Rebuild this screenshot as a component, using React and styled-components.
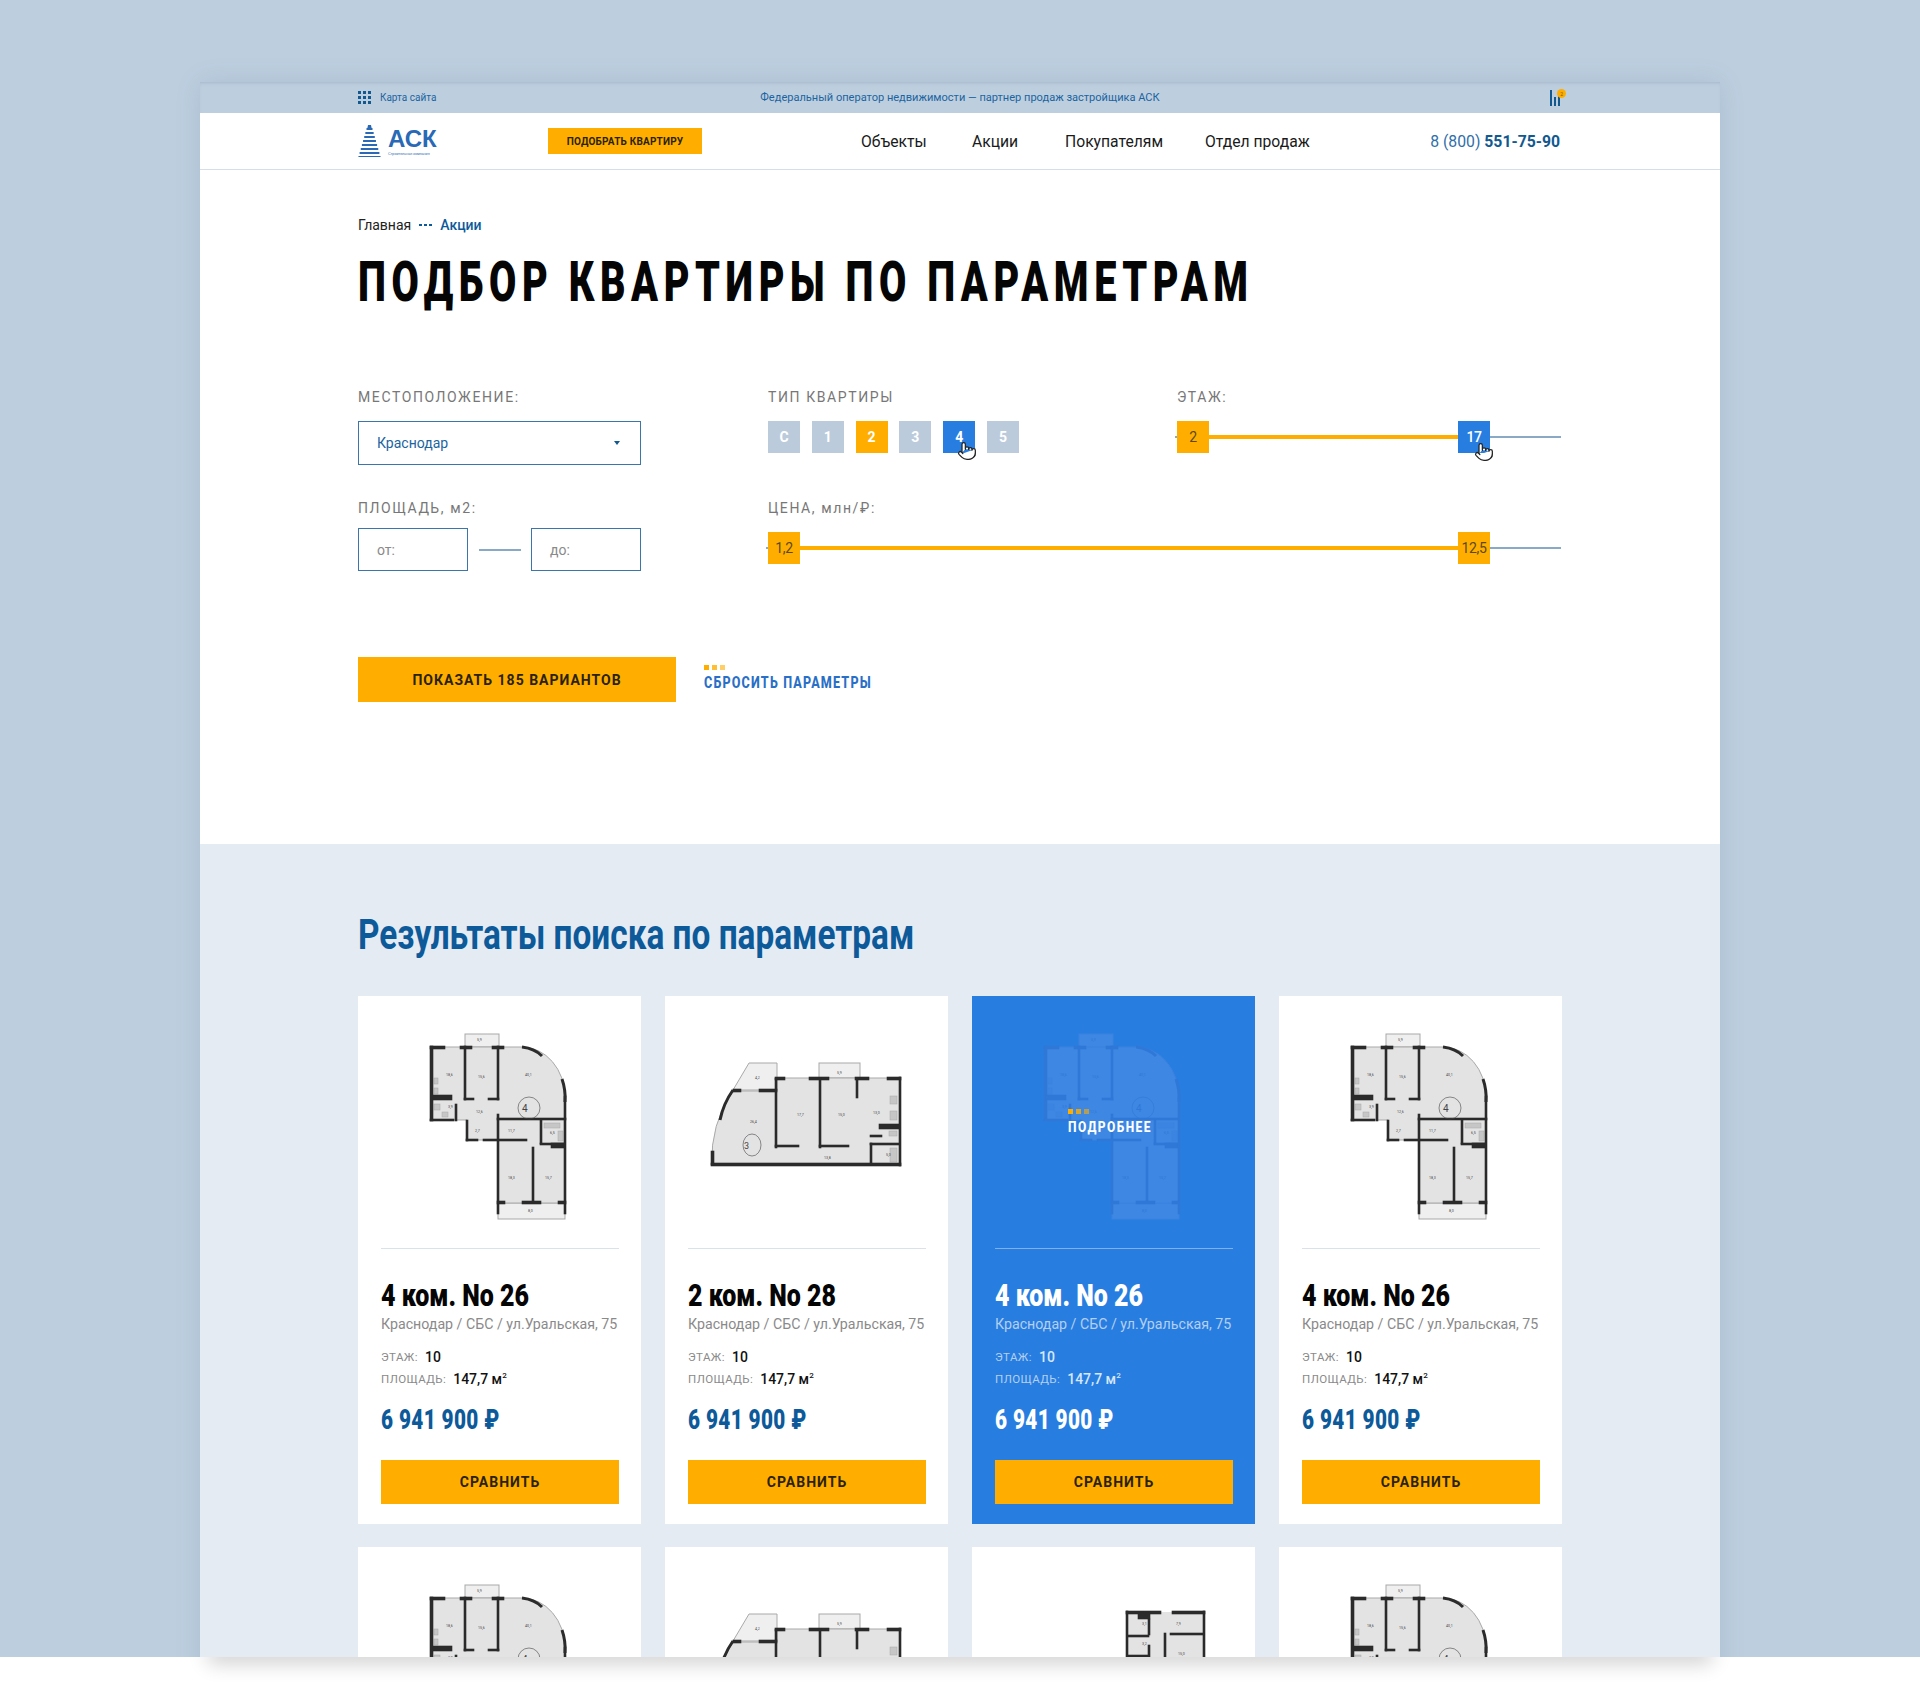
import styled, { createGlobalStyle, css } from "styled-components";
import { Pointer } from "lucide-react";

// no condensed face is installed, so the headline font is Roboto pressed sideways
const squeeze = (k) => css`
  font-family: Roboto, sans-serif;
  display: block;
  width: max-content;
  white-space: nowrap;
  transform: scaleX(${k});
  transform-origin: 0 50%;
`;

const Global = createGlobalStyle`
  * { box-sizing: border-box; }
  body { margin: 0; background: #fff; font-family: Roboto, "Liberation Sans", sans-serif; }
`;

const Stage = styled.div`
  height: 1657px;
  overflow: hidden;
  background: #bdcfdf;
  padding-top: 82px;
`;

const Window = styled.div`
  width: 1520px;
  margin: 0 auto;
  background: #fff;
  box-shadow: 0 0 24px rgba(60, 80, 110, 0.14);
`;

const ShadowStrip = styled.div`
  position: relative;
  height: 26px;
  overflow: hidden;
  background: #fff;
  &::before {
    content: "";
    position: absolute;
    left: 208px;
    right: 208px;
    top: -20px;
    height: 20px;
    box-shadow: 0 6px 20px rgba(0, 0, 0, 0.2);
  }
`;

const TopBar = styled.div`
  height: 31px;
  background: #bdcfdf;
  padding: 0 153px;
  display: grid;
  grid-template-columns: 1fr auto 1fr;
  align-items: center;
  color: #1c649f;
  box-shadow: inset 0 3px 4px -3px rgba(70, 90, 120, 0.3);
`;

const SiteMap = styled.div`
  margin-left: 5px;
  display: flex;
  align-items: center;
  gap: 9px;
  font-size: 10px;
`;

const Slogan = styled.div`
  font-size: 11.05px;
`;

const Stats = styled.div`
  justify-self: end;
  display: flex;
`;

const Header = styled.header`
  height: 57px;
  border-bottom: 1px solid #d6dfe9;
  padding: 0 160px 0 158px;
  display: flex;
  align-items: center;
`;

const Logo = styled.div`
  width: 190px;
  display: flex;
  align-items: center;
  gap: 7px;
`;

const LogoWords = styled.div`
  color: #2a69b5;
  font-family: "Liberation Sans", sans-serif;
  font-weight: 700;
  font-size: 24px;
  line-height: 20px;
  padding-top: 4px;
  small {
    display: block;
    font-size: 3.7px;
    font-weight: 400;
    line-height: 5px;
    margin-top: 3px;
    white-space: nowrap;
  }
`;

const PickButton = styled.div`
  width: 154px;
  height: 26px;
  background: #ffae00;
  color: #2a2208;
  font-size: 10px;
  font-weight: 700;
  letter-spacing: 0.2px;
  display: flex;
  align-items: center;
  justify-content: center;
  white-space: nowrap;
`;

const Nav = styled.nav`
  margin-left: 159px;
  display: flex;
  font-size: 15.7px;
  color: #1a1a1a;
`;

const NavItem = styled.a`
  width: ${(p) => p.$w}px;
`;

const Phone = styled.div`
  margin-left: auto;
  font-size: 15.75px;
  color: #2f6ea8;
  b {
    color: #12598f;
    font-weight: 700;
  }
`;

const Main = styled.main`
  padding: 45px 159px 142px 158px;
`;

const Crumbs = styled.div`
  height: 20px;
  display: flex;
  align-items: center;
  gap: 8px;
  font-size: 14px;
  color: #222;
  b {
    color: #0d5a9a;
    font-weight: 500;
  }
`;

const CrumbDots = styled.span`
  display: flex;
  gap: 2px;
  i {
    width: 3px;
    height: 2px;
    background: #0d5a9a;
  }
`;

const Title = styled.h1`
  ${squeeze(0.72)}
  margin: 17px 0 0;
  font-weight: 900;
  font-size: 55px;
  line-height: 60px;
  letter-spacing: 7.75px;
  color: #050505;
`;

const Filters = styled.div`
  margin-top: 75px;
  display: grid;
  grid-template-columns: 410px 409px 1fr;
  row-gap: 33px;
`;

const Field = styled.div`
  grid-column: ${(p) => p.$span || "auto"};
`;

const Label = styled.div`
  height: 20px;
  line-height: 20px;
  font-size: 14px;
  letter-spacing: 1.6px;
  color: #777;
  margin-bottom: ${(p) => p.$gap}px;
`;

const Select = styled.div`
  width: 283px;
  height: 44px;
  border: 1px solid #3c76a8;
  padding: 0 20px 0 18px;
  display: flex;
  align-items: center;
  justify-content: space-between;
  font-size: 14px;
  color: #1c649f;
`;

const Caret = styled.span`
  width: 0;
  height: 0;
  border-left: 3px solid transparent;
  border-right: 3px solid transparent;
  border-top: 4px solid #12598f;
`;

const Range = styled.div`
  width: 283px;
  display: flex;
  align-items: center;
  justify-content: space-between;
`;

const Input = styled.div`
  width: 110px;
  height: 43px;
  border: 1px solid #3c76a8;
  padding-left: 18px;
  display: flex;
  align-items: center;
  font-size: 14px;
  color: #8a8a8a;
`;

const RangeDash = styled.span`
  width: 42px;
  height: 2px;
  background: #8aa9c4;
`;

const Types = styled.div`
  display: flex;
  gap: 11.8px;
`;

const TONES = {
  idle: "#bccbdc",
  on: "#ffae00",
  active: "#277ee0",
};

const TypeBox = styled.div`
  position: relative;
  width: 32px;
  height: 32px;
  background: ${(p) => TONES[p.$tone]};
  color: #fff;
  font-size: 14px;
  font-weight: 700;
  display: flex;
  align-items: center;
  justify-content: center;
`;

const Slider = styled.div`
  display: flex;
  align-items: center;
  &::before {
    content: "";
    width: 2px;
    height: 2px;
    margin-left: -2px;
    background: #8aa9c4;
  }
`;

const Handle = styled.div`
  position: relative;
  flex: none;
  width: 32px;
  height: 32px;
  background: ${(p) => (p.$active ? "#277ee0" : "#ffae00")};
  color: ${(p) => (p.$active ? "#fff" : "#5a4a1a")};
  font-size: 14px;
  font-weight: ${(p) => (p.$active ? 500 : 400)};
  letter-spacing: -0.4px;
  display: flex;
  align-items: center;
  justify-content: center;
`;

const Fill = styled.div`
  flex: 1;
  height: 4px;
  background: #ffae00;
`;

const Rest = styled.div`
  width: 71px;
  height: 2px;
  background: #8aa9c4;
`;

const Hand = styled(Pointer)`
  position: absolute;
  left: ${(p) => p.$x}px;
  top: ${(p) => p.$y}px;
  fill: #fff;
  color: #222;
`;

const Actions = styled.div`
  margin-top: 86px;
  display: flex;
  align-items: center;
  gap: 28px;
`;

const ShowButton = styled.div`
  width: 318px;
  height: 45px;
  background: #ffae00;
  color: #2a2208;
  font-size: 14px;
  font-weight: 700;
  letter-spacing: 1px;
  display: flex;
  align-items: center;
  justify-content: center;
`;

const Reset = styled.div`
  color: #2a6fc7;
  padding-bottom: 1px;
`;

const ResetLabel = styled.span`
  ${squeeze(0.785)}
  font-weight: 800;
  font-size: 16px;
  letter-spacing: 1.5px;
  line-height: 20px;
`;

const Dots = styled.div`
  display: flex;
  gap: 3px;
  margin-bottom: 3px;
  i {
    width: 5px;
    height: 5px;
    background: #ffae00;
  }
  i:nth-child(2) {
    opacity: 0.8;
  }
  i:nth-child(3) {
    opacity: 0.6;
  }
`;

const Results = styled.section`
  background: #e4ebf3;
  padding: 66px 158px 40px;
`;

const Heading = styled.h2`
  ${squeeze(0.795)}
  margin: 0 0 36px;
  font-weight: 700;
  font-size: 42px;
  line-height: 50px;
  color: #0d5a9a;
`;

const Grid = styled.div`
  display: grid;
  grid-template-columns: repeat(4, 283px);
  gap: 23px 24px;
`;

const CardBox = styled.article`
  position: relative;
  background: ${(p) => (p.$hot ? "#277ee0" : "#fff")};
`;

const Plan = styled.svg`
  display: block;
  width: 283px;
  height: 252px;
`;

const More = styled.div`
  position: absolute;
  left: 96px;
  top: 113px;
  color: #fff;
`;

const MoreLabel = styled.span`
  ${squeeze(0.8)}
  font-weight: 800;
  font-size: 15px;
  letter-spacing: 1.8px;
  line-height: 20px;
`;

const CardBody = styled.div`
  padding: 0 22px 20px 23px;
`;

const Rule = styled.div`
  height: 1px;
  background: ${(p) => (p.$hot ? "#7eb1ec" : "#d9e1ea")};
`;

const CardTitle = styled.h3`
  ${squeeze(0.78)}
  margin: 28px 0 0;
  font-weight: 900;
  font-size: 32px;
  line-height: 36px;
  color: ${(p) => (p.$hot ? "#fff" : "#050505")};
`;

const Address = styled.div`
  margin-top: 1px;
  font-size: 14.2px;
  line-height: 20px;
  white-space: nowrap;
  color: ${(p) => (p.$hot ? "#b5cff0" : "#8a8a8a")};
`;

const Specs = styled.div`
  margin-top: 12px;
`;

const Spec = styled.div`
  height: 22px;
  display: flex;
  align-items: center;
  gap: 7px;
  font-size: 11.5px;
  letter-spacing: 0.45px;
  color: ${(p) => (p.$hot ? "#b5cff0" : "#8a8a8a")};
  b {
    font-size: 14px;
    font-weight: 500;
    letter-spacing: 0;
    color: ${(p) => (p.$hot ? "#d8e7f9" : "#111")};
  }
  sup {
    font-size: 8px;
    line-height: 0;
  }
`;

const Price = styled.div`
  ${squeeze(0.74)}
  margin-top: 12px;
  font-weight: 900;
  font-size: 28px;
  line-height: 36px;
  letter-spacing: 0.5px;
  color: ${(p) => (p.$hot ? "#fff" : "#0d5a9a")};
`;

const CompareButton = styled.div`
  margin-top: 22px;
  height: 44px;
  background: #ffae00;
  color: #2a2208;
  font-size: 14px;
  font-weight: 700;
  letter-spacing: 1px;
  display: flex;
  align-items: center;
  justify-content: center;
`;

function GridIcon() {
  const cells = [];
  for (let r = 0; r < 3; r++) {
    for (let c = 0; c < 3; c++) {
      cells.push(<rect key={`${r}-${c}`} x={c * 5} y={r * 5} width="3" height="3" />);
    }
  }
  return (
    <svg width="13" height="13" viewBox="0 0 13 13" fill="#12598f">
      {cells}
    </svg>
  );
}

function StatsIcon() {
  return (
    <svg width="18" height="20" viewBox="0 0 18 20">
      <rect x="1" y="2" width="2" height="16" fill="#12598f" />
      <rect x="5" y="9" width="2" height="9" fill="#12598f" />
      <rect x="9" y="6" width="2" height="12" fill="#12598f" />
      <circle cx="12.5" cy="5.5" r="4.5" fill="#ffae00" />
      <text x="11.2" y="7.5" fontSize="5" fill="#7a5600" fontFamily="Roboto, sans-serif">2</text>
    </svg>
  );
}

function LogoMark() {
  const bars = [0, 4, 8, 12, 16, 20, 24, 28];
  return (
    <svg width="23" height="32" viewBox="0 0 23 32" fill="#2a69b5">
      <path d="M10 0h3l1 5H9z" />
      {bars.map((y, i) => {
        const half = 3 + i * 1.15;
        return <rect key={y} x={11.5 - half} y={y + 3} width={half * 2} height="2" />;
      })}
    </svg>
  );
}

const PALETTE = {
  light: { floor: "#e3e3e3", wall: "#2b2b2b", thin: "#a9a9a9", ink: "#444", bg: "#efefef" },
  hot: { floor: "#3e87e2", wall: "#2f78d8", thin: "#3a82df", ink: "#2f78d8", bg: "#3e87e2" },
};

function PlanFour({ c }) {
  return (
    <g>
      <rect x="107" y="38" width="34" height="13" fill={c.bg} stroke={c.thin} />
      <rect x="140" y="207" width="67" height="16" fill={c.bg} stroke={c.thin} />
      <path
        d="M73 51H164A43 50 0 0 1 207 101V207H140V144H109V124H73Z"
        fill={c.floor}
        stroke={c.thin}
      />
      <g fill={c.thin} fillOpacity="0.5" stroke={c.thin} strokeWidth="0.5">
        <rect x="76" y="82" width="4" height="6" />
        <rect x="76" y="92" width="4" height="6" />
        <rect x="76" y="108" width="6" height="6" />
        <rect x="84" y="116" width="6" height="5" />
        <rect x="186" y="127" width="16" height="5" />
        <rect x="200" y="135" width="5" height="10" />
      </g>
      <g fill={c.wall} stroke={c.wall} strokeWidth="0.6">
        <rect x="72" y="50" width="3" height="75" />
        <rect x="72" y="50" width="15" height="3" />
        <rect x="102" y="50" width="12" height="3" />
        <rect x="134" y="50" width="12" height="3" />
        <rect x="106" y="50" width="2" height="54" />
        <rect x="139" y="50" width="2" height="54" />
        <rect x="106" y="102" width="10" height="2" />
        <rect x="130" y="102" width="11" height="2" />
        <rect x="74" y="99" width="20" height="5" />
        <rect x="97" y="108" width="2" height="17" />
        <rect x="72" y="123" width="24" height="2" />
        <rect x="139" y="118" width="2" height="100" />
        <rect x="139" y="122" width="69" height="2" />
        <rect x="108" y="124" width="2" height="21" />
        <rect x="108" y="143" width="12" height="2" />
        <rect x="125" y="143" width="44" height="2" />
        <rect x="182" y="124" width="2" height="24" />
        <rect x="182" y="147" width="25" height="2" />
        <rect x="193" y="147" width="14" height="5" />
        <rect x="174" y="151" width="2" height="56" />
        <rect x="206" y="100" width="2" height="118" />
        <rect x="139" y="205" width="8" height="3" />
        <rect x="164" y="205" width="19" height="3" />
        <rect x="200" y="205" width="8" height="3" />
      </g>
      <path d="M164 51A30 20 0 0 1 184 60" fill="none" stroke={c.wall} strokeWidth="3" />
      <path d="M204 83A43 50 0 0 1 207 106" fill="none" stroke={c.wall} strokeWidth="3" />
      <ellipse cx="171" cy="112" rx="11" ry="11" fill="none" stroke={c.ink} strokeWidth="0.6" />
      <text x="164" y="116" fontSize="10" fill={c.ink}>4</text>
      <g fontSize="3.6" fill={c.ink} fontFamily="Roboto, sans-serif">
        <text x="119" y="45">5,9</text>
        <text x="88" y="80">18,6</text>
        <text x="120" y="82">15,6</text>
        <text x="167" y="80">40,1</text>
        <text x="118" y="117">12,6</text>
        <text x="90" y="112">3,9</text>
        <text x="117" y="136">2,7</text>
        <text x="150" y="136">11,7</text>
        <text x="192" y="138">6,5</text>
        <text x="150" y="183">18,3</text>
        <text x="187" y="183">15,7</text>
        <text x="170" y="216">8,0</text>
      </g>
    </g>
  );
}

function PlanTwo({ c }) {
  return (
    <g>
      <path d="M68 94L84 67H112V94Z" fill={c.bg} stroke={c.thin} />
      <rect x="154" y="67" width="41" height="15" fill={c.bg} stroke={c.thin} />
      <path d="M47 169A120 120 0 0 1 68 95H112V82H235V169Z" fill={c.floor} stroke={c.thin} />
      <g fill={c.thin} fillOpacity="0.5" stroke={c.thin} strokeWidth="0.5">
        <rect x="225" y="100" width="7" height="8" />
        <rect x="225" y="115" width="7" height="9" />
        <rect x="224" y="135" width="8" height="5" />
        <rect x="225" y="152" width="7" height="14" />
      </g>
      <g fill={c.wall} stroke={c.wall} strokeWidth="0.6">
        <rect x="46" y="167" width="190" height="3" />
        <rect x="46" y="155" width="3" height="14" />
        <rect x="110" y="82" width="2" height="70" />
        <rect x="110" y="81" width="10" height="3" />
        <rect x="144" y="81" width="20" height="3" />
        <rect x="190" y="81" width="14" height="3" />
        <rect x="222" y="81" width="14" height="3" />
        <rect x="234" y="81" width="2" height="89" />
        <rect x="154" y="82" width="2" height="70" />
        <rect x="191" y="82" width="2" height="20" />
        <rect x="110" y="149" width="24" height="2" />
        <rect x="154" y="149" width="30" height="2" />
        <rect x="214" y="128" width="21" height="5" />
        <rect x="205" y="147" width="30" height="2" />
        <rect x="205" y="147" width="2" height="21" />
        <rect x="205" y="139" width="12" height="2" />
        <rect x="94" y="93" width="18" height="3" />
        <rect x="68" y="93" width="8" height="3" />
      </g>
      <path d="M68 94A80 80 0 0 0 55 124" fill="none" stroke={c.wall} strokeWidth="3" />
      <ellipse cx="87" cy="149" rx="9" ry="11" fill="none" stroke={c.ink} strokeWidth="0.6" />
      <text x="79" y="153" fontSize="9" fill={c.ink}>3</text>
      <g fontSize="3.6" fill={c.ink} fontFamily="Roboto, sans-serif">
        <text x="90" y="83">4,2</text>
        <text x="172" y="78">5,9</text>
        <text x="85" y="127">26,4</text>
        <text x="132" y="120">17,7</text>
        <text x="173" y="120">15,0</text>
        <text x="208" y="118">13,0</text>
        <text x="159" y="163">13,8</text>
        <text x="221" y="160">5,0</text>
      </g>
    </g>
  );
}

function PlanOne({ c }) {
  return (
    <g>
      <path d="M155 65H232V200H155Z" fill={c.floor} />
      <g fill={c.wall} stroke={c.wall} strokeWidth="0.6">
        <rect x="154" y="64" width="2" height="140" />
        <rect x="154" y="64" width="35" height="3" />
        <rect x="200" y="64" width="33" height="3" />
        <rect x="231" y="64" width="2" height="140" />
        <rect x="166" y="65" width="12" height="7" />
        <rect x="176" y="72" width="2" height="16" />
        <rect x="176" y="98" width="2" height="20" />
        <rect x="155" y="88" width="22" height="2" />
        <rect x="192" y="86" width="2" height="30" />
        <rect x="198" y="86" width="34" height="2" />
        <rect x="155" y="108" width="22" height="2" />
      </g>
      <g fontSize="3.6" fill={c.ink} fontFamily="Roboto, sans-serif">
        <text x="170" y="78">3,1</text>
        <text x="170" y="98">3,2</text>
        <text x="204" y="78">7,9</text>
        <text x="206" y="108">15,0</text>
      </g>
    </g>
  );
}

const PLANS = { four: PlanFour, two: PlanTwo, one: PlanOne };

function Card({ plan, title, hot }) {
  const Drawing = PLANS[plan];
  return (
    <CardBox $hot={hot}>
      <Plan viewBox="0 0 283 252">
        <Drawing c={hot ? PALETTE.hot : PALETTE.light} />
      </Plan>
      {hot && (
        <More>
          <Dots>
            <i />
            <i />
            <i />
          </Dots>
          <MoreLabel>ПОДРОБНЕЕ</MoreLabel>
        </More>
      )}
      <CardBody>
        <Rule $hot={hot} />
        <CardTitle $hot={hot}>{title}</CardTitle>
        <Address $hot={hot}>Краснодар / СБС / ул.Уральская, 75</Address>
        <Specs>
          <Spec $hot={hot}>
            ЭТАЖ: <b>10</b>
          </Spec>
          <Spec $hot={hot}>
            ПЛОЩАДЬ:{" "}
            <b>
              147,7 м<sup>2</sup>
            </b>
          </Spec>
        </Specs>
        <Price $hot={hot}>6 941 900 ₽</Price>
        <CompareButton>СРАВНИТЬ</CompareButton>
      </CardBody>
    </CardBox>
  );
}

const CARDS = [
  { plan: "four", title: "4 ком. No 26" },
  { plan: "two", title: "2 ком. No 28" },
  { plan: "four", title: "4 ком. No 26", hot: true },
  { plan: "four", title: "4 ком. No 26" },
  { plan: "four", title: "4 ком. No 26" },
  { plan: "two", title: "2 ком. No 28" },
  { plan: "one", title: "1 ком. No 12" },
  { plan: "four", title: "4 ком. No 26" },
];

const TYPES = [
  ["С", "idle"],
  ["1", "idle"],
  ["2", "on"],
  ["3", "idle"],
  ["4", "active"],
  ["5", "idle"],
];

export default function App() {
  return (
    <>
      <Global />
      <Stage>
        <Window>
          <TopBar>
            <SiteMap>
              <GridIcon />
              Карта сайта
            </SiteMap>
            <Slogan>Федеральный оператор недвижимости — партнер продаж застройщика АСК</Slogan>
            <Stats>
              <StatsIcon />
            </Stats>
          </TopBar>
          <Header>
            <Logo>
              <LogoMark />
              <LogoWords>
                АСК
                <small>Строительная компания</small>
              </LogoWords>
            </Logo>
            <PickButton>ПОДОБРАТЬ КВАРТИРУ</PickButton>
            <Nav>
              <NavItem $w={111}>Объекты</NavItem>
              <NavItem $w={93}>Акции</NavItem>
              <NavItem $w={140}>Покупателям</NavItem>
              <NavItem $w={106}>Отдел продаж</NavItem>
            </Nav>
            <Phone>
              8 (800) <b>551-75-90</b>
            </Phone>
          </Header>
          <Main>
            <Crumbs>
              Главная
              <CrumbDots>
                <i />
                <i />
                <i />
              </CrumbDots>
              <b>Акции</b>
            </Crumbs>
            <Title>ПОДБОР КВАРТИРЫ ПО ПАРАМЕТРАМ</Title>
            <Filters>
              <Field>
                <Label $gap={14}>МЕСТОПОЛОЖЕНИЕ:</Label>
                <Select>
                  Краснодар
                  <Caret />
                </Select>
              </Field>
              <Field>
                <Label $gap={14}>ТИП КВАРТИРЫ</Label>
                <Types>
                  {TYPES.map(([name, tone]) => (
                    <TypeBox key={name} $tone={tone}>
                      {name}
                      {tone === "active" && <Hand size={20} strokeWidth={1.5} $x={14} $y={20} />}
                    </TypeBox>
                  ))}
                </Types>
              </Field>
              <Field>
                <Label $gap={14}>ЭТАЖ:</Label>
                <Slider>
                  <Handle>2</Handle>
                  <Fill />
                  <Handle $active>
                    17
                    <Hand size={20} strokeWidth={1.5} $x={16} $y={21} />
                  </Handle>
                  <Rest />
                </Slider>
              </Field>
              <Field>
                <Label $gap={10}>ПЛОЩАДЬ, м2:</Label>
                <Range>
                  <Input>от:</Input>
                  <RangeDash />
                  <Input>до:</Input>
                </Range>
              </Field>
              <Field $span="span 2">
                <Label $gap={14}>ЦЕНА, млн/₽:</Label>
                <Slider>
                  <Handle>1,2</Handle>
                  <Fill />
                  <Handle>12,5</Handle>
                  <Rest />
                </Slider>
              </Field>
            </Filters>
            <Actions>
              <ShowButton>ПОКАЗАТЬ 185 ВАРИАНТОВ</ShowButton>
              <Reset>
                <Dots>
                  <i />
                  <i />
                  <i />
                </Dots>
                <ResetLabel>СБРОСИТЬ ПАРАМЕТРЫ</ResetLabel>
              </Reset>
            </Actions>
          </Main>
          <Results>
            <Heading>Результаты поиска по параметрам</Heading>
            <Grid>
              {CARDS.map((card, i) => (
                <Card key={i} {...card} />
              ))}
            </Grid>
          </Results>
        </Window>
      </Stage>
      <ShadowStrip />
    </>
  );
}
